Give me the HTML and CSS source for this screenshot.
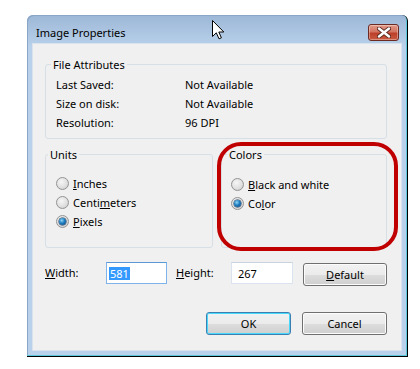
FILE: index.html
```html
<!DOCTYPE html>
<html lang="en">
<head>
    <title>Image Properties</title>
    <link rel="stylesheet" href="styles.css">
</head>
<body>
    <div class="window">
        <div class="titlebar">
            <span class="title">Image Properties</span>
            <button class="close" aria-label="Close">
                <svg width="14" height="11" viewBox="0 0 14 11">
                    <path d="M2 1.5 L12 9.5 M12 1.5 L2 9.5" stroke="#5a2a22" stroke-width="4.2" stroke-linecap="round"/>
                    <path d="M2 1.5 L12 9.5 M12 1.5 L2 9.5" stroke="#ffffff" stroke-width="2.4" stroke-linecap="round"/>
                </svg>
            </button>
        </div>

        <svg class="cursor" width="13" height="20" viewBox="0 0 13 20">
            <path d="M0.5 0.5 L0.5 16.5 L4.3 12.8 L7 18.8 L9.4 17.8 L6.8 12 L11.8 12 Z" fill="#fff" stroke="#000" stroke-width="1"/>
        </svg>

        <div class="content">
            <fieldset class="group attrs">
                <legend>File Attributes</legend>
                <div class="row"><span class="key">Last Saved:</span><span>Not Available</span></div>
                <div class="row"><span class="key">Size on disk:</span><span>Not Available</span></div>
                <div class="row"><span class="key">Resolution:</span><span>96 DPI</span></div>
            </fieldset>

            <div class="groups">
                <fieldset class="group units">
                    <legend>Units</legend>
                    <div class="row"><span class="radio"></span><span><u>I</u>nches</span></div>
                    <div class="row"><span class="radio"></span><span>Centi<u>m</u>eters</span></div>
                    <div class="row"><span class="radio checked"></span><span><u>P</u>ixels</span></div>
                </fieldset>
                <fieldset class="group colors">
                    <legend>Colors</legend>
                    <div class="row"><span class="radio"></span><span><u>B</u>lack and white</span></div>
                    <div class="row"><span class="radio checked"></span><span>Co<u>l</u>or</span></div>
                </fieldset>
            </div>

            <div class="size-row">
                <span class="label width-label"><u>W</u>idth:</span>
                <div class="field focused"><span class="selected">581</span></div>
                <span class="label height-label"><u>H</u>eight:</span>
                <div class="field"><span class="value">267</span></div>
                <button class="btn default-btn"><u>D</u>efault</button>
            </div>

            <div class="actions">
                <button class="btn primary">OK</button>
                <button class="btn">Cancel</button>
            </div>

            <div class="highlight"></div>
        </div>
    </div>
</body>
</html>
```

FILE: styles.css
```css
body {
    margin: 0;
    padding: 15px 0 0 27px;
    background-color: #fff;
    font-family: "Noto Sans", "Open Sans", sans-serif;
    font-size: 11px;
    color: #000;
}

.window {
    position: relative;
    width: 368px;
    padding: 0 6px 6px 6px;
    background: linear-gradient(#9cb7d7, #b9d1ea 32px, #b9d1ea);
    border-right: 1px solid #000;
    border-bottom: 1px solid #000;
    border-radius: 6px 6px 0 0;
    box-shadow: inset -1px -1px 0 #5cc8dc, inset 1px 1px 0 #8aa6c6;
}

.titlebar {
    display: flex;
    align-items: center;
    justify-content: space-between;
    height: 29px;
    box-sizing: border-box;
    padding: 9px 2px 3px 3px;
}

.title {
    font-size: 11px;
    line-height: 17px;
}

.close {
    width: 31px;
    height: 17px;
    padding: 0;
    display: flex;
    align-items: center;
    justify-content: center;
    border: 1px solid #6b2b23;
    border-radius: 3px;
    background: linear-gradient(#e29a88, #d27561 45%, #bd3f2a 55%, #c95a40);
    box-shadow: inset 0 0 0 1px rgba(255,255,255,0.35);
}

.cursor {
    position: absolute;
    left: 185px;
    top: 5px;
}

.content {
    position: relative;
    background-color: #f0f0f0;
    padding: 13px 14px 15px 12px;
    box-shadow: 0 0 0 1px #d8e3ee;
}

.group {
    margin: 0;
    border: 1px solid #d5dfe5;
    border-radius: 3px;
    padding: 3px 10px 6px 10px;
    min-width: 0;
}

.group legend {
    padding: 0 2px;
    margin-left: -5px;
    line-height: 15px;
}

.row {
    display: flex;
    align-items: center;
    height: 19px;
    line-height: 15px;
}

.key {
    width: 129px;
}

.groups {
    display: grid;
    grid-template-columns: 168px 1fr;
    gap: 8px;
    margin-top: 8px;
}

.units, .colors {
    padding: 12px 8px 16px 10px;
}

.units legend {
    margin-left: -8px;
}

.colors legend {
    margin-left: -4px;
}

.colors {
    padding-left: 9px;
}

.colors .row:first-of-type {
    margin-top: 1px;
}

.radio {
    width: 13px;
    height: 13px;
    box-sizing: border-box;
    border: 1px solid #939393;
    border-radius: 50%;
    margin-right: 4px;
    background: radial-gradient(circle at 40% 35%, #f6f6f6, #dedede 60%, #c4c4c4);
    display: flex;
    align-items: center;
    justify-content: center;
}

.radio.checked::after {
    content: "";
    width: 7px;
    height: 7px;
    border-radius: 50%;
    background: radial-gradient(circle at 40% 35%, #8fd6f6, #1f7dc0 45%, #0a3f75);
    box-shadow: 0 0 0 0.5px #16365a;
}

.size-row {
    display: flex;
    align-items: flex-start;
    margin-top: 14px;
    height: 24px;
}

.label {
    line-height: 22px;
}

.width-label {
    width: 61px;
}

.height-label {
    width: 55px;
    margin-left: 9px;
}

.field {
    width: 62px;
    height: 22px;
    box-sizing: border-box;
    background-color: #fff;
    border: 1px solid #dbe4ee;
    border-top-color: #c9d3dd;
    display: flex;
    align-items: center;
    padding-left: 2px;
}

.field.focused {
    width: 61px;
    border-color: #7eb4ea;
    border-top-color: #5c98d6;
}

.selected {
    background-color: #3399ff;
    color: #fff;
    line-height: 13px;
    padding: 0 1px;
}

.value {
    padding-left: 4px;
}

.btn {
    font-family: inherit;
    font-size: 11px;
    color: #000;
    width: 85px;
    height: 23px;
    padding: 0;
    border: 1px solid #707070;
    border-radius: 3px;
    background: linear-gradient(#f2f2f2, #ebebeb 50%, #dddddd 51%, #cfcfcf);
    box-shadow: inset 0 0 0 1px #fcfcfc;
}

.default-btn {
    width: 84px;
    margin-left: 10px;
    margin-top: 1px;
}

.actions {
    display: flex;
    justify-content: flex-end;
    gap: 11px;
    margin-top: 26px;
}

.btn.primary {
    border-color: #3c7fb1;
    box-shadow: inset 0 0 0 1px #48d8fb;
}

.highlight {
    position: absolute;
    left: 184px;
    top: 98px;
    width: 181px;
    height: 109px;
    box-sizing: border-box;
    border: 4px solid #c00000;
    border-radius: 24px;
    pointer-events: none;
}
```
